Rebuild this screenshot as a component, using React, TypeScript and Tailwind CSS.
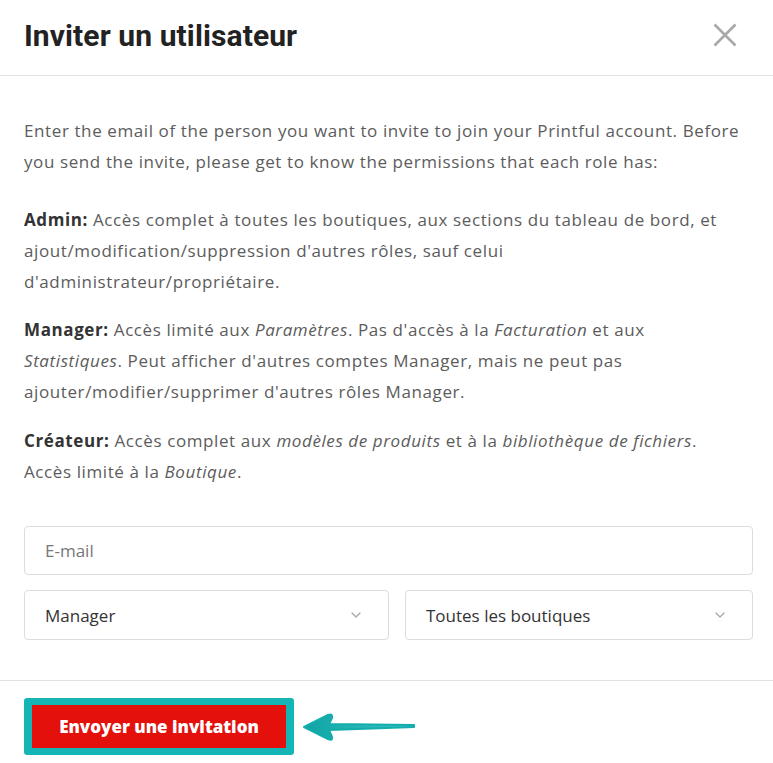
import { ChevronDown } from 'lucide-react';

function Select({ label, className }: { label: string; className?: string }) {
  return (
    <div
      className={`flex h-[50px] items-center justify-between rounded-[4px] border border-[#dcdcdc] pl-5 pr-6 text-[17px] text-[#333] ${className ?? ''}`}
    >
      <span>{label}</span>
      <ChevronDown className="h-4 w-4 text-[#a8a8a8]" strokeWidth={2} />
    </div>
  );
}

export default function App() {
  return (
    <main className="h-[763px] w-[773px] overflow-hidden bg-white font-['Open_Sans','Liberation_Sans',sans-serif]">
      <header className="flex h-[76px] items-center justify-between border-b border-[#e2e2e2] pb-1 pl-6 pr-9">
        <h1 className="font-['Roboto',sans-serif] text-[30px] font-bold tracking-[0.1px] text-[#222]">
          Inviter un utilisateur
        </h1>
        <svg width="24" height="24" viewBox="0 0 24 24" className="mt-[-2px]">
          <path d="M1.5 1.5 L22.5 22.5 M22.5 1.5 L1.5 22.5" stroke="#a8a8a8" strokeWidth="2.6" />
        </svg>
      </header>

      <section className="pl-6 pr-5 pt-[39px] text-[17px] leading-[31px] tracking-[0.6px] text-[#5c5c5c]">
        <p>
          Enter the email of the person you want to invite to join your Printful account. Before
          <br />
          you send the invite, please get to know the permissions that each role has:
        </p>
        <p className="mt-[27px]">
          <b className="text-[#333]">Admin:</b> Accès complet à toutes les boutiques, aux sections du tableau de bord, et
          <br />
          ajout/modification/suppression d'autres rôles, sauf celui
          <br />
          d'administrateur/propriétaire.
        </p>
        <p className="mt-[17px]">
          <b className="text-[#333]">Manager:</b> Accès limité aux <i>Paramètres</i>. Pas d'accès à la <i>Facturation</i>{' '}
          et aux
          <br />
          <i>Statistiques</i>. Peut afficher d'autres comptes Manager, mais ne peut pas
          <br />
          ajouter/modifier/supprimer d'autres rôles Manager.
        </p>
        <p className="mt-[18px]">
          <b className="text-[#333]">Créateur:</b> Accès complet aux <i>modèles de produits</i> et à la{' '}
          <i>bibliothèque de fichiers</i>.
          <br />
          Accès limité à la <i>Boutique</i>.
        </p>

        <div className="mt-[39px] flex h-[49px] items-center rounded-[4px] border border-[#dcdcdc] pl-5 text-[17px] tracking-normal text-[#777]">
          E-mail
        </div>
        <div className="mt-[15px] flex gap-4 tracking-normal">
          <Select label="Manager" className="w-[365px]" />
          <Select label="Toutes les boutiques" className="flex-1" />
        </div>
      </section>

      <footer className="mt-[40px] flex items-center border-t border-[#e2e2e2] pl-6 pt-[17px]">
        <div className="rounded-[3px] bg-[#16b5b5] px-[8px] py-[7px]">
          <button className="h-[43px] w-[254px] bg-[#e3100c] text-[17px] font-extrabold text-white">
            Envoyer une invitation
          </button>
        </div>
        <svg width="114" height="34" viewBox="0 0 114 34" className="ml-[8px]">
          <defs>
            <linearGradient id="ag" x1="0" y1="0" x2="1" y2="0">
              <stop offset="0" stopColor="#0fa3a3" />
              <stop offset="1" stopColor="#3cc8c8" />
            </linearGradient>
          </defs>
          <path
            d="M2 17 L26 5 Q31 3 30 8 L27 14 L112 15 L112 17 L27 20 L30 27 Q31 31 26 29 Z"
            fill="url(#ag)"
            stroke="#14adad"
            strokeWidth="2"
            strokeLinejoin="round"
          />
        </svg>
      </footer>
    </main>
  );
}
